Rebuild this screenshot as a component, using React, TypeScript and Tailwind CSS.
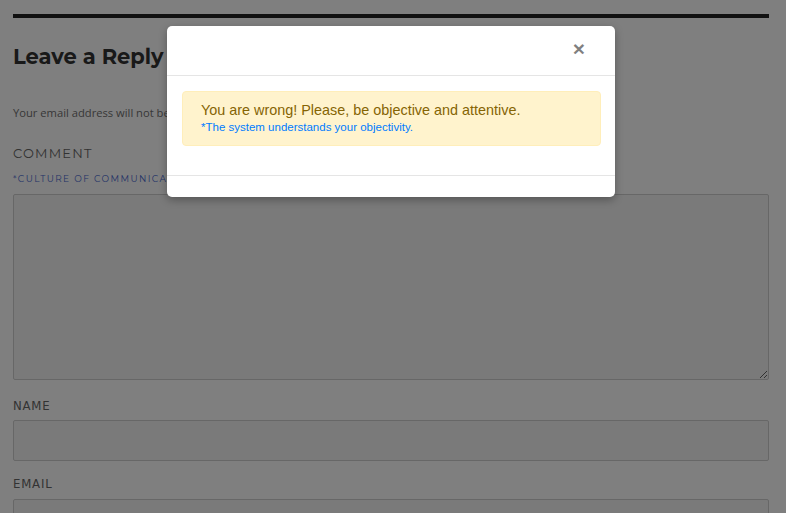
export default function App() {
  return (
    <div className="relative h-[513px] bg-white overflow-hidden">
      {/* page behind the dialog */}
      <div className="px-[13px] pt-[14px]">
        <div className="h-[4px] w-[756px] bg-[#222]" />
        <h2
          className="mt-[24px] text-[21px] leading-[30px] font-bold text-[#333]"
          style={{ fontFamily: "Montserrat, Inter, 'Liberation Sans', sans-serif" }}
        >
          Leave a Reply
        </h2>
        <p
          className="mt-[33px] text-[11.2px] leading-[16px] text-[#707070]"
          style={{ fontFamily: "'Open Sans', sans-serif" }}
        >
          Your email address will not be published. Required fields are marked *
        </p>
        <div
          className="mt-[24px] text-[13px] leading-[16px] tracking-[1.2px] text-[#666] uppercase"
          style={{ fontFamily: "Montserrat, Inter, sans-serif" }}
        >
          Comment
        </div>
        <div
          className="mt-[12px] text-[9px] leading-[12px] tracking-[1.4px] text-[#4a6ad0] uppercase"
          style={{ fontFamily: "Montserrat, Inter, sans-serif" }}
        >
          *Culture of communication is important
        </div>
        <textarea className="mt-[9px] block w-[756px] h-[186px] bg-[#f5f5f5] border border-[#cfcfcf] rounded-[2px]" />
        <div
          className="mt-[18px] text-[13px] leading-[16px] tracking-[0.8px] text-[#666] uppercase"
          style={{ fontFamily: "'DejaVu Sans Condensed', 'Liberation Sans Narrow', sans-serif" }}
        >
          Name
        </div>
        <div className="mt-[6px] w-[756px] h-[41px] bg-[#f5f5f5] border border-[#cfcfcf] rounded-[2px]" />
        <div
          className="mt-[15px] text-[13px] leading-[16px] tracking-[0.8px] text-[#666] uppercase"
          style={{ fontFamily: "'DejaVu Sans Condensed', 'Liberation Sans Narrow', sans-serif" }}
        >
          Email
        </div>
        <div className="mt-[7px] w-[756px] h-[41px] bg-[#f5f5f5] border border-[#cfcfcf] rounded-[2px]" />
      </div>

      {/* backdrop + dialog */}
      <div className="absolute inset-0 bg-black/50">
        <div
          className="ml-[167px] mt-[26px] w-[448px] bg-white rounded-[5px] shadow-[0_3px_9px_rgba(0,0,0,0.3)]"
          style={{ fontFamily: "'Liberation Sans', Arial, sans-serif" }}
        >
          <div className="h-[50px] border-b border-[#e5e5e5] flex items-center justify-end pr-[30px] pb-[4px]">
            <span className="text-[21px] font-bold leading-none text-black/50">×</span>
          </div>
          <div className="p-[15px] pr-[14px] pb-[29px]">
            <div className="bg-[#fff3cd] border border-[#ffeeba] rounded-[4px] pl-[18px] pt-[9px] pb-[10px]">
              <div className="text-[14.4px] leading-[19px] text-[#856404]">
                You are wrong! Please, be objective and attentive.
              </div>
              <div className="text-[11.5px] leading-[15px] text-[#007bff]">
                *The system understands your objectivity.
              </div>
            </div>
          </div>
          <div className="h-[22px] border-t border-[#e5e5e5]" />
        </div>
      </div>
    </div>
  );
}
